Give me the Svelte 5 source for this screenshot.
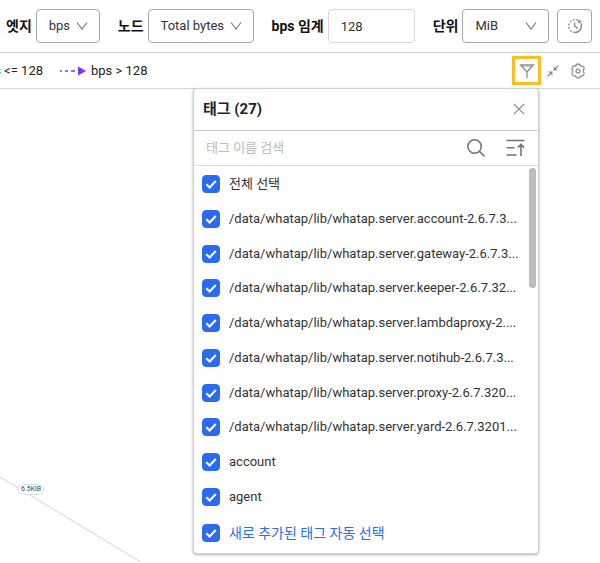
<script>
  let edge = $state('bps');
  let node = $state('Total bytes');
  let threshold = $state('128');
  let unit = $state('MiB');
  let query = $state('');

  const base = '/data/whatap/lib/whatap.server.';
  let tags = $state([
    { name: '전체 선택', checked: true },
    { name: base + 'account-2.6.7.3...', checked: true },
    { name: base + 'gateway-2.6.7.3...', checked: true },
    { name: base + 'keeper-2.6.7.32...', checked: true },
    { name: base + 'lambdaproxy-2....', checked: true },
    { name: base + 'notihub-2.6.7.3...', checked: true },
    { name: base + 'proxy-2.6.7.320...', checked: true },
    { name: base + 'yard-2.6.7.3201...', checked: true },
    { name: 'account', checked: true },
    { name: 'agent', checked: true }
  ]);
  let autoSelect = $state(true);
</script>

{#snippet chevron()}
  <svg class="chevron" width="12" height="10" viewBox="0 0 12 10" aria-hidden="true">
    <path d="M1 1.5 L6 8 L11 1.5" fill="none" stroke="#777" stroke-width="1.1" />
  </svg>
{/snippet}

{#snippet tick()}
  <svg class="tick" width="18" height="18" viewBox="0 0 18 18" aria-hidden="true">
    <path d="M4.3 9.2 L7.6 12.4 L13.8 6" fill="none" stroke="#fff" stroke-width="2.1" />
  </svg>
{/snippet}

<div class="page">
  <header class="toolbar">
    <div class="field">
      <label for="edge">엣지</label>
      <span class="select edge">
        <select id="edge" bind:value={edge}><option>bps</option></select>
        {@render chevron()}
      </span>
    </div>
    <div class="field">
      <label for="node">노드</label>
      <span class="select node">
        <select id="node" bind:value={node}><option>Total bytes</option></select>
        {@render chevron()}
      </span>
    </div>
    <div class="field">
      <label for="threshold">bps 임계</label>
      <input class="threshold" id="threshold" type="text" bind:value={threshold} />
    </div>
    <div class="field">
      <label for="unit">단위</label>
      <span class="select unit">
        <select id="unit" bind:value={unit}><option>MiB</option></select>
        {@render chevron()}
      </span>
      <button class="history" type="button" aria-label="시간">
        <svg width="16" height="16" viewBox="0 0 16 16" fill="none" stroke="#8a8a8a" stroke-width="1.4">
          <path d="M8 14.4 A6.4 6.4 0 0 0 13.6 5" />
          <path d="M8 14.4 A6.4 6.4 0 1 1 10.8 2.2" stroke-dasharray="2 1.5" />
          <path d="M7.6 4.4 V8 L10.8 10.4" />
          <path d="M10.8 5.4 L11.4 1.8 L15 3.2 Z" fill="#8a8a8a" stroke="none" />
        </svg>
      </button>
    </div>
  </header>

  <div class="legend">
    <span class="below">bps &lt;= 128</span>
    <span class="above">
      <svg width="28" height="12" viewBox="0 0 28 12" aria-hidden="true">
        <path d="M1 6 H3 M6 6 H9 M12 6 H16" stroke="#7b35ff" stroke-width="1.3" />
        <path d="M19 1.6 L27.2 6 L19 10.4 Z" fill="#7b35ff" />
      </svg>
      bps &gt; 128
    </span>
    <div class="tools">
      <button class="filter" type="button" aria-label="필터">
        <svg width="16" height="16" viewBox="0 0 16 16" fill="none" stroke="#8f8f8f" stroke-width="1.3">
          <path d="M1.6 1.8 H14.4 L8 9 Z M8 8.8 V15" />
          <path d="M3 3 H13" stroke-width="1" />
        </svg>
      </button>
      <button type="button" aria-label="축소">
        <svg width="12" height="12" viewBox="0 0 12 12" fill="none" stroke="#8a8a8a" stroke-width="1.2">
          <path d="M11.5 .5 L7.3 4.7 M.5 11.5 L4.7 7.3" />
          <path d="M6.6 1.2 V5.4 H10.8 Z M1.2 6.6 H5.4 V10.8 Z" fill="#8a8a8a" stroke="none" />
        </svg>
      </button>
      <button type="button" aria-label="설정">
        <svg width="16" height="16" viewBox="0 0 16 16" fill="none" stroke="#8f8f8f" stroke-width="1.3">
          <path d="M5.5 3 Q6.2 1 8 1 Q9.8 1 10.5 3 Q12.7 2.5 13.7 4 Q14.8 5.7 13.2 8 Q14.8 10.3 13.7 12 Q12.7 13.5 10.5 13 Q9.8 15 8 15 Q6.2 15 5.5 13 Q3.3 13.5 2.3 12 Q1.2 10.3 2.8 8 Q1.2 5.7 2.3 4 Q3.3 2.5 5.5 3 Z" />
          <circle cx="8" cy="8" r="1.9" />
        </svg>
      </button>
    </div>
  </div>

  <main class="canvas">
    <svg class="edges" width="140" height="85" viewBox="0 0 140 85" aria-hidden="true">
      <path d="M0 0 L140 84.5" stroke="#d4d4d4" stroke-width="1" />
    </svg>
    <span class="rate">6.5KiB</span>

    <section class="panel">
      <div class="title">
        <h2>태그 (27)</h2>
        <button type="button" aria-label="닫기">
          <svg width="12" height="12" viewBox="0 0 12 12"><path d="M.8 .8 L11.2 11.2 M11.2 .8 L.8 11.2" stroke="#888" stroke-width="1.2" /></svg>
        </button>
      </div>
      <div class="search">
        <input type="text" aria-label="태그 이름 검색" placeholder="태그 이름 검색" bind:value={query} />
        <button type="button" aria-label="검색">
          <svg width="18" height="18" viewBox="0 0 18 18" fill="none" stroke="#737373" stroke-width="1.6">
            <circle cx="7.6" cy="7.5" r="6.7" /><path d="M12.3 12.3 L17.5 17.4" />
          </svg>
        </button>
        <button type="button" aria-label="정렬">
          <svg width="19" height="18" viewBox="0 0 19 18" fill="none" stroke="#737373" stroke-width="1.6">
            <path d="M.5 1.5 H18.5 M.5 8.7 H8.5 M.5 16 H10.5 M15 17 V5.5 M11.9 8.6 L15 5.5 L18.1 8.6" />
          </svg>
        </button>
      </div>
      <div class="body">
        <ul>
          {#each tags as tag}
            <li>
              <label>
                <span class="box"><input type="checkbox" bind:checked={tag.checked} />{@render tick()}</span>
                <span class="name">{tag.name}</span>
              </label>
            </li>
          {/each}
        </ul>
        <div class="track"><div class="thumb"></div></div>
      </div>
      <label class="auto">
        <span class="box"><input type="checkbox" bind:checked={autoSelect} />{@render tick()}</span>
        <span class="name">새로 추가된 태그 자동 선택</span>
      </label>
    </section>
  </main>
</div>

<style>
  :global(body) {
    margin: 0;
    background: #fff;
  }
  .page {
    font-family: Roboto, 'Noto Sans CJK KR', sans-serif;
    font-size: 13px;
    line-height: 20px;
    color: #333;
    min-height: 100vh;
    display: flex;
    flex-direction: column;
    overflow: hidden;
  }
  * {
    box-sizing: border-box;
  }
  button,
  input,
  select {
    font: inherit;
    color: inherit;
    margin: 0;
    padding: 0;
    border: 0;
    background: none;
  }
  button {
    display: flex;
    align-items: center;
    justify-content: center;
    flex: none;
  }
  svg {
    display: block;
    flex: none;
  }
  .toolbar {
    display: flex;
    gap: 18px;
    padding: 9px 6px;
    border-bottom: 1px solid #d0d0d0;
  }
  .field {
    display: flex;
    align-items: center;
    gap: 4px;
    white-space: nowrap;
  }
  .field label {
    font-size: 14px;
    font-weight: 700;
    color: #111;
  }
  .select {
    display: grid;
    align-items: center;
  }
  .select select,
  .select .chevron {
    grid-area: 1 / 1;
  }
  .select select {
    appearance: none;
    width: 100%;
    height: 34px;
    padding: 0 12px;
    border: 1px solid #a6a6a6;
    border-radius: 4px;
  }
  .chevron {
    justify-self: end;
    margin-right: 12px;
    pointer-events: none;
  }
  .edge {
    width: 64px;
  }
  .node {
    width: 106px;
  }
  .unit,
  .threshold {
    width: 87px;
  }
  .threshold {
    height: 34px;
    padding: 0 12px;
    border: 1px solid #d6d6d6;
    border-radius: 4px;
  }
  .history {
    width: 35px;
    height: 34px;
    margin-left: 4px;
    border: 1px solid #a6a6a6;
    border-radius: 4px;
  }
  .legend {
    display: flex;
    align-items: center;
    height: 36px;
    padding-right: 14px;
    border-bottom: 1px solid #d6d6d6;
    white-space: nowrap;
    color: #222;
  }
  .below {
    display: flex;
    justify-content: flex-end;
    width: 43px;
    overflow: hidden;
  }
  .above {
    display: flex;
    align-items: center;
    gap: 4px;
    margin-left: 16px;
  }
  .tools {
    display: flex;
    align-items: center;
    gap: 6px;
    margin-left: auto;
  }
  .tools button:last-child {
    margin-left: 5px;
  }
  .filter {
    width: 29px;
    height: 29px;
    border: 3px solid #fbbf24;
  }
  .canvas {
    position: relative;
    flex: 1;
    padding: 0 61px 9px 193px;
  }
  .edges {
    position: absolute;
    left: 0;
    top: 388px;
  }
  .rate {
    position: absolute;
    left: 18px;
    top: 395px;
    padding: 0 2px;
    border: 1px solid #ddd;
    border-radius: 6px;
    background: #fff;
    color: #444;
    font-size: 7px;
    line-height: 9px;
  }
  .panel {
    position: relative;
    margin-top: -1px;
    border: 1px solid #cfcfcf;
    border-radius: 4px;
    background: #fff;
    box-shadow: 0 1px 3px rgba(0, 0, 0, 0.3);
  }
  .title {
    display: flex;
    align-items: center;
    justify-content: space-between;
    height: 42px;
    padding: 0 13px 2px 9px;
    border-bottom: 1px solid #ccc;
  }
  h2 {
    margin: 0;
    font-size: 15px;
    font-weight: 700;
    color: #222;
  }
  .search {
    display: flex;
    align-items: center;
    gap: 21px;
    height: 35px;
    padding: 0 13px 0 12px;
    border-bottom: 1px solid #ddd;
  }
  .search input {
    flex: 1;
    min-width: 0;
  }
  .search input::placeholder {
    color: #bbb;
    opacity: 1;
  }
  .body {
    display: flex;
    height: 347px;
    margin-top: 1px;
  }
  ul {
    flex: 1;
    min-width: 0;
    display: grid;
    grid-auto-rows: 1fr;
    margin: 0;
    padding: 0;
    list-style: none;
  }
  li {
    display: flex;
    align-items: center;
  }
  .panel label {
    display: flex;
    align-items: center;
    gap: 9px;
    padding-left: 8px;
    white-space: nowrap;
  }
  .box {
    display: grid;
  }
  .box input,
  .box .tick {
    grid-area: 1 / 1;
  }
  .box input {
    appearance: none;
    width: 18px;
    height: 18px;
    border: 1px solid #2b6bf3;
    border-radius: 4px;
  }
  .box input:checked {
    background: #2b6bf3;
  }
  .tick {
    pointer-events: none;
  }
  .track {
    padding: 1px 2px 0 0;
  }
  .thumb {
    width: 7px;
    height: 120px;
    border-radius: 3px;
    background: #bdbdbd;
  }
  .panel .auto {
    height: 39px;
    padding-bottom: 1px;
    color: #2b6bf3;
  }
  .auto .name {
    font-size: 14px;
  }
</style>
